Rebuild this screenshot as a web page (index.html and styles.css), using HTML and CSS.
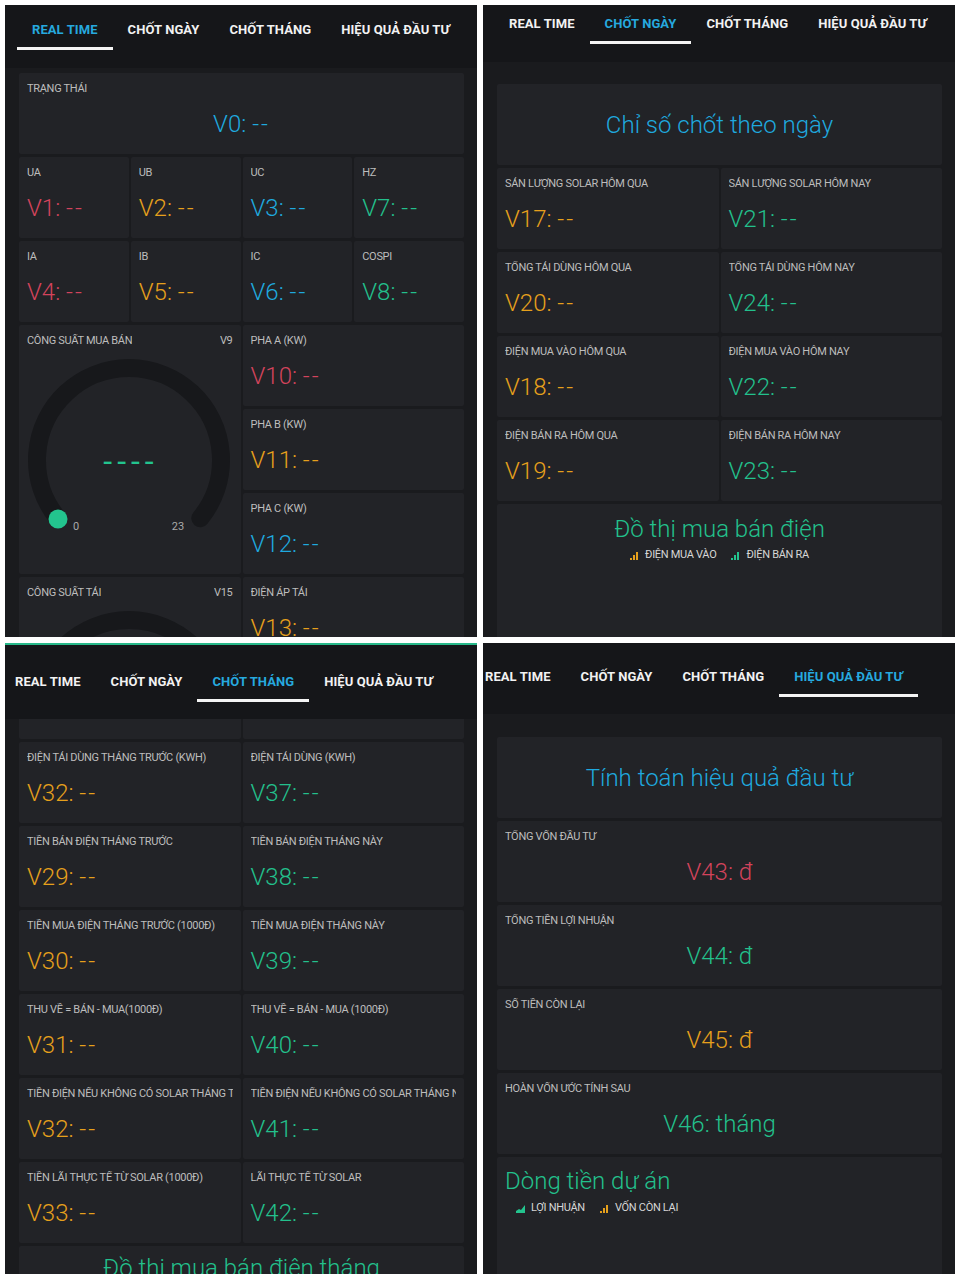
FILE: index.html
```html
<!DOCTYPE html>
<html lang="vi">
<head>
<meta charset="utf-8">
<title>Blynk dashboard</title>
<link rel="stylesheet" href="styles.css">
</head>
<body>
<div class="collage">

  <!-- Panel 1: REAL TIME -->
  <section class="panel p1">
    <nav class="tabs">
      <span class="tab active">REAL TIME</span>
      <span class="tab">CHỐT NGÀY</span>
      <span class="tab">CHỐT THÁNG</span>
      <span class="tab">HIỆU QUẢ ĐẦU TƯ</span>
    </nav>
    <div class="content">
      <div class="grid g4">
        <div class="card span4"><div class="lbl">TRẠNG THÁI</div><div class="val center blue">V0: <span class="dd">--</span></div></div>
        <div class="card"><div class="lbl">UA</div><div class="val red">V1: <span class="dd">--</span></div></div>
        <div class="card"><div class="lbl">UB</div><div class="val yellow">V2: <span class="dd">--</span></div></div>
        <div class="card"><div class="lbl">UC</div><div class="val blue">V3: <span class="dd">--</span></div></div>
        <div class="card"><div class="lbl">HZ</div><div class="val green">V7: <span class="dd">--</span></div></div>
        <div class="card"><div class="lbl">IA</div><div class="val red">V4: <span class="dd">--</span></div></div>
        <div class="card"><div class="lbl">IB</div><div class="val yellow">V5: <span class="dd">--</span></div></div>
        <div class="card"><div class="lbl">IC</div><div class="val blue">V6: <span class="dd">--</span></div></div>
        <div class="card"><div class="lbl">COSPI</div><div class="val green">V8: <span class="dd">--</span></div></div>

        <div class="card gauge span2 rows3">
          <div class="lblrow"><span class="lbl">CÔNG SUẤT MUA BÁN</span><span class="lbl">V9</span></div>
          <svg class="gsvg" viewBox="0 0 221 210" width="221" height="210">
            <path d="M 38.7 163.2 A 92 92 0 1 1 181.3 163.2" fill="none" stroke="#17181b" stroke-width="18" stroke-linecap="round"/>
            <circle cx="39" cy="164" r="9.5" fill="#23c48e"/>
            <text x="112" y="117" text-anchor="middle" class="gdash">----</text>
            <text x="57" y="175" text-anchor="middle" class="gnum">0</text>
            <text x="159" y="175" text-anchor="middle" class="gnum">23</text>
          </svg>
        </div>
        <div class="card span2"><div class="lbl">PHA A (KW)</div><div class="val red">V10: <span class="dd">--</span></div></div>
        <div class="card span2"><div class="lbl">PHA B (KW)</div><div class="val yellow">V11: <span class="dd">--</span></div></div>
        <div class="card span2"><div class="lbl">PHA C (KW)</div><div class="val blue">V12: <span class="dd">--</span></div></div>

        <div class="card gauge span2 rows3">
          <div class="lblrow"><span class="lbl">CÔNG SUẤT TẢI</span><span class="lbl">V15</span></div>
          <svg class="gsvg" viewBox="0 0 221 210" width="221" height="210">
            <path d="M 38.7 163.2 A 92 92 0 1 1 181.3 163.2" fill="none" stroke="#17181b" stroke-width="18" stroke-linecap="round"/>
          </svg>
        </div>
        <div class="card span2"><div class="lbl">ĐIỆN ÁP TẢI</div><div class="val yellow">V13: <span class="dd">--</span></div></div>
      </div>
    </div>
  </section>

  <!-- Panel 2: CHỐT NGÀY -->
  <section class="panel p2">
    <nav class="tabs">
      <span class="tab">REAL TIME</span>
      <span class="tab active">CHỐT NGÀY</span>
      <span class="tab">CHỐT THÁNG</span>
      <span class="tab">HIỆU QUẢ ĐẦU TƯ</span>
    </nav>
    <div class="content">
      <div class="grid g2">
        <div class="card span2 titlecard"><span class="title blue">Chỉ số chốt theo ngày</span></div>
        <div class="card"><div class="lbl">SẢN LƯỢNG SOLAR HÔM QUA</div><div class="val yellow">V17: <span class="dd">--</span></div></div>
        <div class="card"><div class="lbl">SẢN LƯỢNG SOLAR HÔM NAY</div><div class="val green">V21: <span class="dd">--</span></div></div>
        <div class="card"><div class="lbl">TỔNG TẢI DÙNG HÔM QUA</div><div class="val yellow">V20: <span class="dd">--</span></div></div>
        <div class="card"><div class="lbl">TỔNG TẢI DÙNG HÔM NAY</div><div class="val green">V24: <span class="dd">--</span></div></div>
        <div class="card"><div class="lbl">ĐIỆN MUA VÀO HÔM QUA</div><div class="val yellow">V18: <span class="dd">--</span></div></div>
        <div class="card"><div class="lbl">ĐIỆN MUA VÀO HÔM NAY</div><div class="val green">V22: <span class="dd">--</span></div></div>
        <div class="card"><div class="lbl">ĐIỆN BÁN RA HÔM QUA</div><div class="val yellow">V19: <span class="dd">--</span></div></div>
        <div class="card"><div class="lbl">ĐIỆN BÁN RA HÔM NAY</div><div class="val green">V23: <span class="dd">--</span></div></div>
        <div class="card span2 rows3 chart">
          <div class="title green ctitle">Đồ thị mua bán điện</div>
          <div class="legend">
            <span class="li"><svg width="10" height="9" viewBox="0 0 10 9"><rect x="0" y="7" width="2" height="2" fill="#e6a01c"/><rect x="3" y="4" width="2" height="5" fill="#e6a01c"/><rect x="6" y="1" width="2" height="8" fill="#e6a01c"/></svg>ĐIỆN MUA VÀO</span>
            <span class="li"><svg width="10" height="9" viewBox="0 0 10 9"><rect x="0" y="7" width="2" height="2" fill="#23c48e"/><rect x="3" y="4" width="2" height="5" fill="#23c48e"/><rect x="6" y="1" width="2" height="8" fill="#23c48e"/></svg>ĐIỆN BÁN RA</span>
          </div>
        </div>
      </div>
    </div>
  </section>

  <!-- Panel 3: CHỐT THÁNG -->
  <section class="panel p3">
    <nav class="tabs">
      <span class="tab">REAL TIME</span>
      <span class="tab">CHỐT NGÀY</span>
      <span class="tab active">CHỐT THÁNG</span>
      <span class="tab">HIỆU QUẢ ĐẦU TƯ</span>
    </nav>
    <div class="content">
      <div class="grid g2">
        <div class="card"></div>
        <div class="card"></div>
        <div class="card"><div class="lbl">ĐIỆN TẢI DÙNG THÁNG TRƯỚC (KWH)</div><div class="val yellow">V32: <span class="dd">--</span></div></div>
        <div class="card"><div class="lbl">ĐIỆN TẢI DÙNG (KWH)</div><div class="val green">V37: <span class="dd">--</span></div></div>
        <div class="card"><div class="lbl">TIỀN BÁN ĐIỆN THÁNG TRƯỚC</div><div class="val yellow">V29: <span class="dd">--</span></div></div>
        <div class="card"><div class="lbl">TIỀN BÁN ĐIỆN THÁNG NÀY</div><div class="val green">V38: <span class="dd">--</span></div></div>
        <div class="card"><div class="lbl">TIỀN MUA ĐIỆN THÁNG TRƯỚC (1000Đ)</div><div class="val yellow">V30: <span class="dd">--</span></div></div>
        <div class="card"><div class="lbl">TIỀN MUA ĐIỆN THÁNG NÀY</div><div class="val green">V39: <span class="dd">--</span></div></div>
        <div class="card"><div class="lbl">THU VỀ = BÁN - MUA(1000Đ)</div><div class="val yellow">V31: <span class="dd">--</span></div></div>
        <div class="card"><div class="lbl">THU VỀ = BÁN - MUA (1000Đ)</div><div class="val green">V40: <span class="dd">--</span></div></div>
        <div class="card"><div class="lbl">TIỀN ĐIỆN NẾU KHÔNG CÓ SOLAR THÁNG TRƯỚC</div><div class="val yellow">V32: <span class="dd">--</span></div></div>
        <div class="card"><div class="lbl">TIỀN ĐIỆN NẾU KHÔNG CÓ SOLAR THÁNG NÀY</div><div class="val green">V41: <span class="dd">--</span></div></div>
        <div class="card"><div class="lbl">TIỀN LÃI THỰC TẾ TỪ SOLAR (1000Đ)</div><div class="val yellow">V33: <span class="dd">--</span></div></div>
        <div class="card"><div class="lbl">LÃI THỰC TẾ TỪ SOLAR</div><div class="val green">V42: <span class="dd">--</span></div></div>
        <div class="card span2 rows3 chart chart3">
          <div class="title green ctitle">Đồ thị mua bán điện tháng</div>
        </div>
      </div>
    </div>
  </section>

  <!-- Panel 4: HIỆU QUẢ ĐẦU TƯ -->
  <section class="panel p4">
    <nav class="tabs">
      <span class="tab">REAL TIME</span>
      <span class="tab">CHỐT NGÀY</span>
      <span class="tab">CHỐT THÁNG</span>
      <span class="tab active">HIỆU QUẢ ĐẦU TƯ</span>
    </nav>
    <div class="content">
      <div class="grid g1">
        <div class="card titlecard"><span class="title blue">Tính toán hiệu quả đầu tư</span></div>
        <div class="card"><div class="lbl">TỔNG VỐN ĐẦU TƯ</div><div class="val center red">V43: đ</div></div>
        <div class="card"><div class="lbl">TỔNG TIỀN LỢI NHUẬN</div><div class="val center green">V44: đ</div></div>
        <div class="card"><div class="lbl">SỐ TIỀN CÒN LẠI</div><div class="val center yellow">V45: đ</div></div>
        <div class="card"><div class="lbl">HOÀN VỐN ƯỚC TÍNH SAU</div><div class="val center green">V46: tháng</div></div>
        <div class="card rows3 chart chart4">
          <div class="title green ctitle4">Dòng tiền dự án</div>
          <div class="legend legend4">
            <span class="li"><svg width="10" height="9" viewBox="0 0 10 9"><polygon points="0,9 0,7 3,5 5,6 9,1 9,9" fill="#23c48e"/></svg>LỢI NHUẬN</span>
            <span class="li"><svg width="10" height="9" viewBox="0 0 10 9"><rect x="0" y="7" width="2" height="2" fill="#e6a01c"/><rect x="3" y="4" width="2" height="5" fill="#e6a01c"/><rect x="6" y="1" width="2" height="8" fill="#e6a01c"/></svg>VỐN CÒN LẠI</span>
          </div>
        </div>
      </div>
    </div>
  </section>

</div>
</body>
</html>
```

FILE: styles.css
```css
* { box-sizing: border-box; }

html, body {
  margin: 0;
  padding: 0;
  background: #ffffff;
}

body {
  font-family: Roboto, "Noto Sans", "DejaVu Sans", sans-serif;
  color: #e8e8e8;
}

.collage {
  display: grid;
  grid-template-columns: 472px 472px;
  grid-template-rows: 632px 631px;
  gap: 6px;
  padding: 5px;
  width: 960px;
}

.panel {
  background: #1a1b1e;
  overflow: hidden;
  display: flex;
  flex-direction: column;
}

.tabs {
  position: relative;
  z-index: 1;
  flex: none;
  display: flex;
  align-items: flex-start;
  background: #151619;
  white-space: nowrap;
}

.tab {
  flex: none;
  padding: 0 15px 9px;
  font-size: 13px;
  font-weight: 700;
  line-height: 16px;
  letter-spacing: 0.08px;
  color: #f2f2f2;
  border-bottom: 3px solid transparent;
}

.tab.active {
  color: #26a9df;
  border-bottom-color: #f4f4f4;
}

.p1 .tabs { height: 63px; padding: 17px 0 0 12px; }
.p2 .tabs { height: 57px; padding: 11px 0 0 11px; }
.p3 { border-top: 2px solid #27b98a; }
.p3 .tabs { height: 74px; padding: 29px 0 0 0; margin-left: -5px; }
.p4 .tabs { height: 71px; padding: 26px 0 0 0; margin-left: -13px; }

.content {
  flex: 1;
  padding: 0 13px 0 14px;
}

.p1 .content { padding-top: 5px; }
.p2 .content { padding-top: 22px; }
.p3 .content { margin-top: -61px; }
.p4 .content { padding-top: 23px; }

.grid {
  display: grid;
  grid-auto-rows: 81px;
  gap: 3px 2px;
}

.g4 { grid-template-columns: repeat(4, 1fr); }
.g2 { grid-template-columns: repeat(2, 1fr); }
.g1 { grid-template-columns: 1fr; }

.span2 { grid-column: span 2; }
.span4 { grid-column: span 4; }
.rows3 { grid-row: span 3; }

.card {
  background: #222327;
  border-radius: 2px;
  padding: 9px 8px 0;
  min-width: 0;
  overflow: hidden;
}

.lbl {
  font-size: 11px;
  line-height: 14px;
  letter-spacing: -0.3px;
  color: #bdbdbd;
  white-space: nowrap;
  overflow: hidden;
}

.lblrow {
  display: flex;
  justify-content: space-between;
}

.val {
  margin-top: 14px;
  font-size: 24px;
  font-weight: 300;
  line-height: 28px;
  white-space: nowrap;
}

.dd {
  letter-spacing: 2px;
}

.val.center { text-align: center; }

.red { color: #d3435c; }
.yellow { color: #e6a01c; }
.blue { color: #1fa9df; }
.green { color: #23c08c; }

/* gauge */
.gauge { padding: 9px 8px 0; }
.gsvg {
  display: block;
  margin: 7px 0 0 -8px;
}
.gdash {
  font-family: Roboto, "DejaVu Sans", sans-serif;
  font-size: 32px;
  font-weight: 400;
  letter-spacing: 5px;
  fill: #23c48e;
}
.gnum {
  font-family: Roboto, "DejaVu Sans", sans-serif;
  font-size: 11px;
  fill: #a9a9a9;
}

/* title cards */
.titlecard {
  display: flex;
  align-items: center;
  justify-content: center;
  padding: 0;
}

.title {
  font-size: 24px;
  font-weight: 300;
  line-height: 30px;
  white-space: nowrap;
}

.chart { padding: 10px 8px 0; }
.ctitle { text-align: center; }
.chart3 { padding-top: 7px; }
.chart4 { padding-top: 9px; }
.ctitle4 { text-align: left; }

.legend {
  margin-top: 4px;
  display: flex;
  justify-content: center;
  gap: 15px;
  font-size: 11px;
  line-height: 14px;
  letter-spacing: -0.3px;
  color: #d6d6d6;
}

.legend4 {
  justify-content: flex-start;
  padding-left: 11px;
  margin-top: 5px;
}

.li {
  display: inline-flex;
  align-items: center;
  gap: 5px;
}

.li svg { display: block; }
```
